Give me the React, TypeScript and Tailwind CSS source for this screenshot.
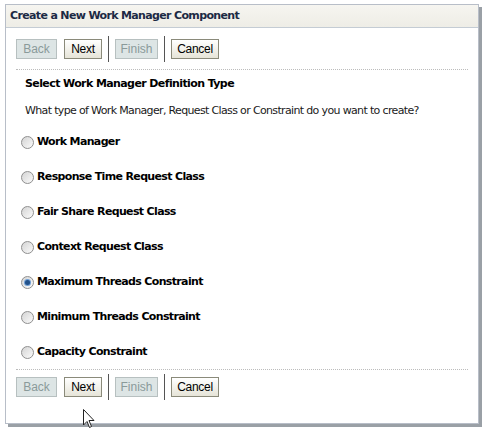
import React from "react";

const options = [
  "Work Manager",
  "Response Time Request Class",
  "Fair Share Request Class",
  "Context Request Class",
  "Maximum Threads Constraint",
  "Minimum Threads Constraint",
  "Capacity Constraint",
];

function Radio({ checked }: { checked?: boolean }) {
  return (
    <span className="flex h-[13px] w-[13px] shrink-0 items-center justify-center rounded-full border border-[#8f8f8f] bg-gradient-to-br from-[#d4d4d4] to-[#fbfbfb]">
      {checked && <span className="h-[5px] w-[5px] rounded-full bg-[#21518a] ring-1 ring-[#6f9fd6]" />}
    </span>
  );
}

function Btn({ label, disabled, w }: { label: string; disabled?: boolean; w: string }) {
  if (disabled) {
    return (
      <div className={`flex h-[20px] ${w} items-center justify-center border border-[#b7c0c0] bg-[#dde5e5] text-[12px] leading-[14px] text-[#8a9a9a]`}>
        {label}
      </div>
    );
  }
  return (
    <div className={`flex h-[20px] ${w} items-center justify-center border border-[#8a8a7a] bg-gradient-to-b from-white to-[#e6e4d8] text-[12px] leading-[14px] tracking-[-0.3px] text-black`}>
      {label}
    </div>
  );
}

function ButtonRow() {
  return (
    <div className="flex items-center font-['Liberation_Sans',sans-serif]">
      <Btn label="Back" disabled w="w-[41px]" />
      <div className="ml-[7px]">
        <Btn label="Next" w="w-[38px]" />
      </div>
      <div className="mx-[6px] h-[26px] w-px bg-[#555]" />
      <Btn label="Finish" disabled w="w-[43px]" />
      <div className="mx-[6px] h-[26px] w-px bg-[#555]" />
      <Btn label="Cancel" w="w-[48px]" />
    </div>
  );
}

export default function App() {
  return (
    <div className="relative h-[435px] w-[484px] bg-white pl-[5px] pt-[4px] font-['DejaVu_Sans',sans-serif]">
      <div className="flex h-[420px] w-[474px] flex-col border border-[#b8bec8] shadow-[3px_3px_0_#9aa0a6]">
        <div className="flex h-[23px] items-center border-b border-[#c4ccd4] bg-gradient-to-b from-[#f6f5f0] to-[#eeede6] pl-[4px] text-[11px] font-bold tracking-[-0.65px] text-[#1c2a44]">
          Create a New Work Manager Component
        </div>
        <div className="px-[10px] pt-[8px]">
          <ButtonRow />
          <div className="mt-[7px] border-t border-dotted border-[#bcbcbc]" />
          <div className="pl-[9px] pt-[7px] text-[11px] font-bold leading-[14px] tracking-[-0.6px] text-black">
            Select Work Manager Definition Type
          </div>
          <div className="pl-[9px] pt-[13px] text-[11px] leading-[14px] tracking-[-0.65px] text-[#1a1a1a]">
            What type of Work Manager, Request Class or Constraint do you want to create?
          </div>
          <div className="flex flex-col gap-[21px] pt-[17px]">
            {options.map((o, i) => (
              <div key={o} className="flex h-[14px] items-center gap-[3px] pl-[5px] text-[11px] font-bold leading-[14px] tracking-[-0.65px] text-black">
                <Radio checked={i === 4} />
                <span>{o}</span>
              </div>
            ))}
          </div>
          <div className="mt-[10px] border-t border-dotted border-[#bcbcbc]" />
          <div className="pt-[4px]">
            <ButtonRow />
          </div>
        </div>
      </div>
      <svg className="absolute left-[83px] top-[409px]" width="13" height="20" viewBox="0 0 13 20">
        <path d="M0.5 0.5 L0.5 16 L4 12.5 L6.5 18.5 L8.5 17.5 L6 11.5 L11 11.5 Z" fill="white" stroke="#222" strokeWidth="1" />
      </svg>
    </div>
  );
}
